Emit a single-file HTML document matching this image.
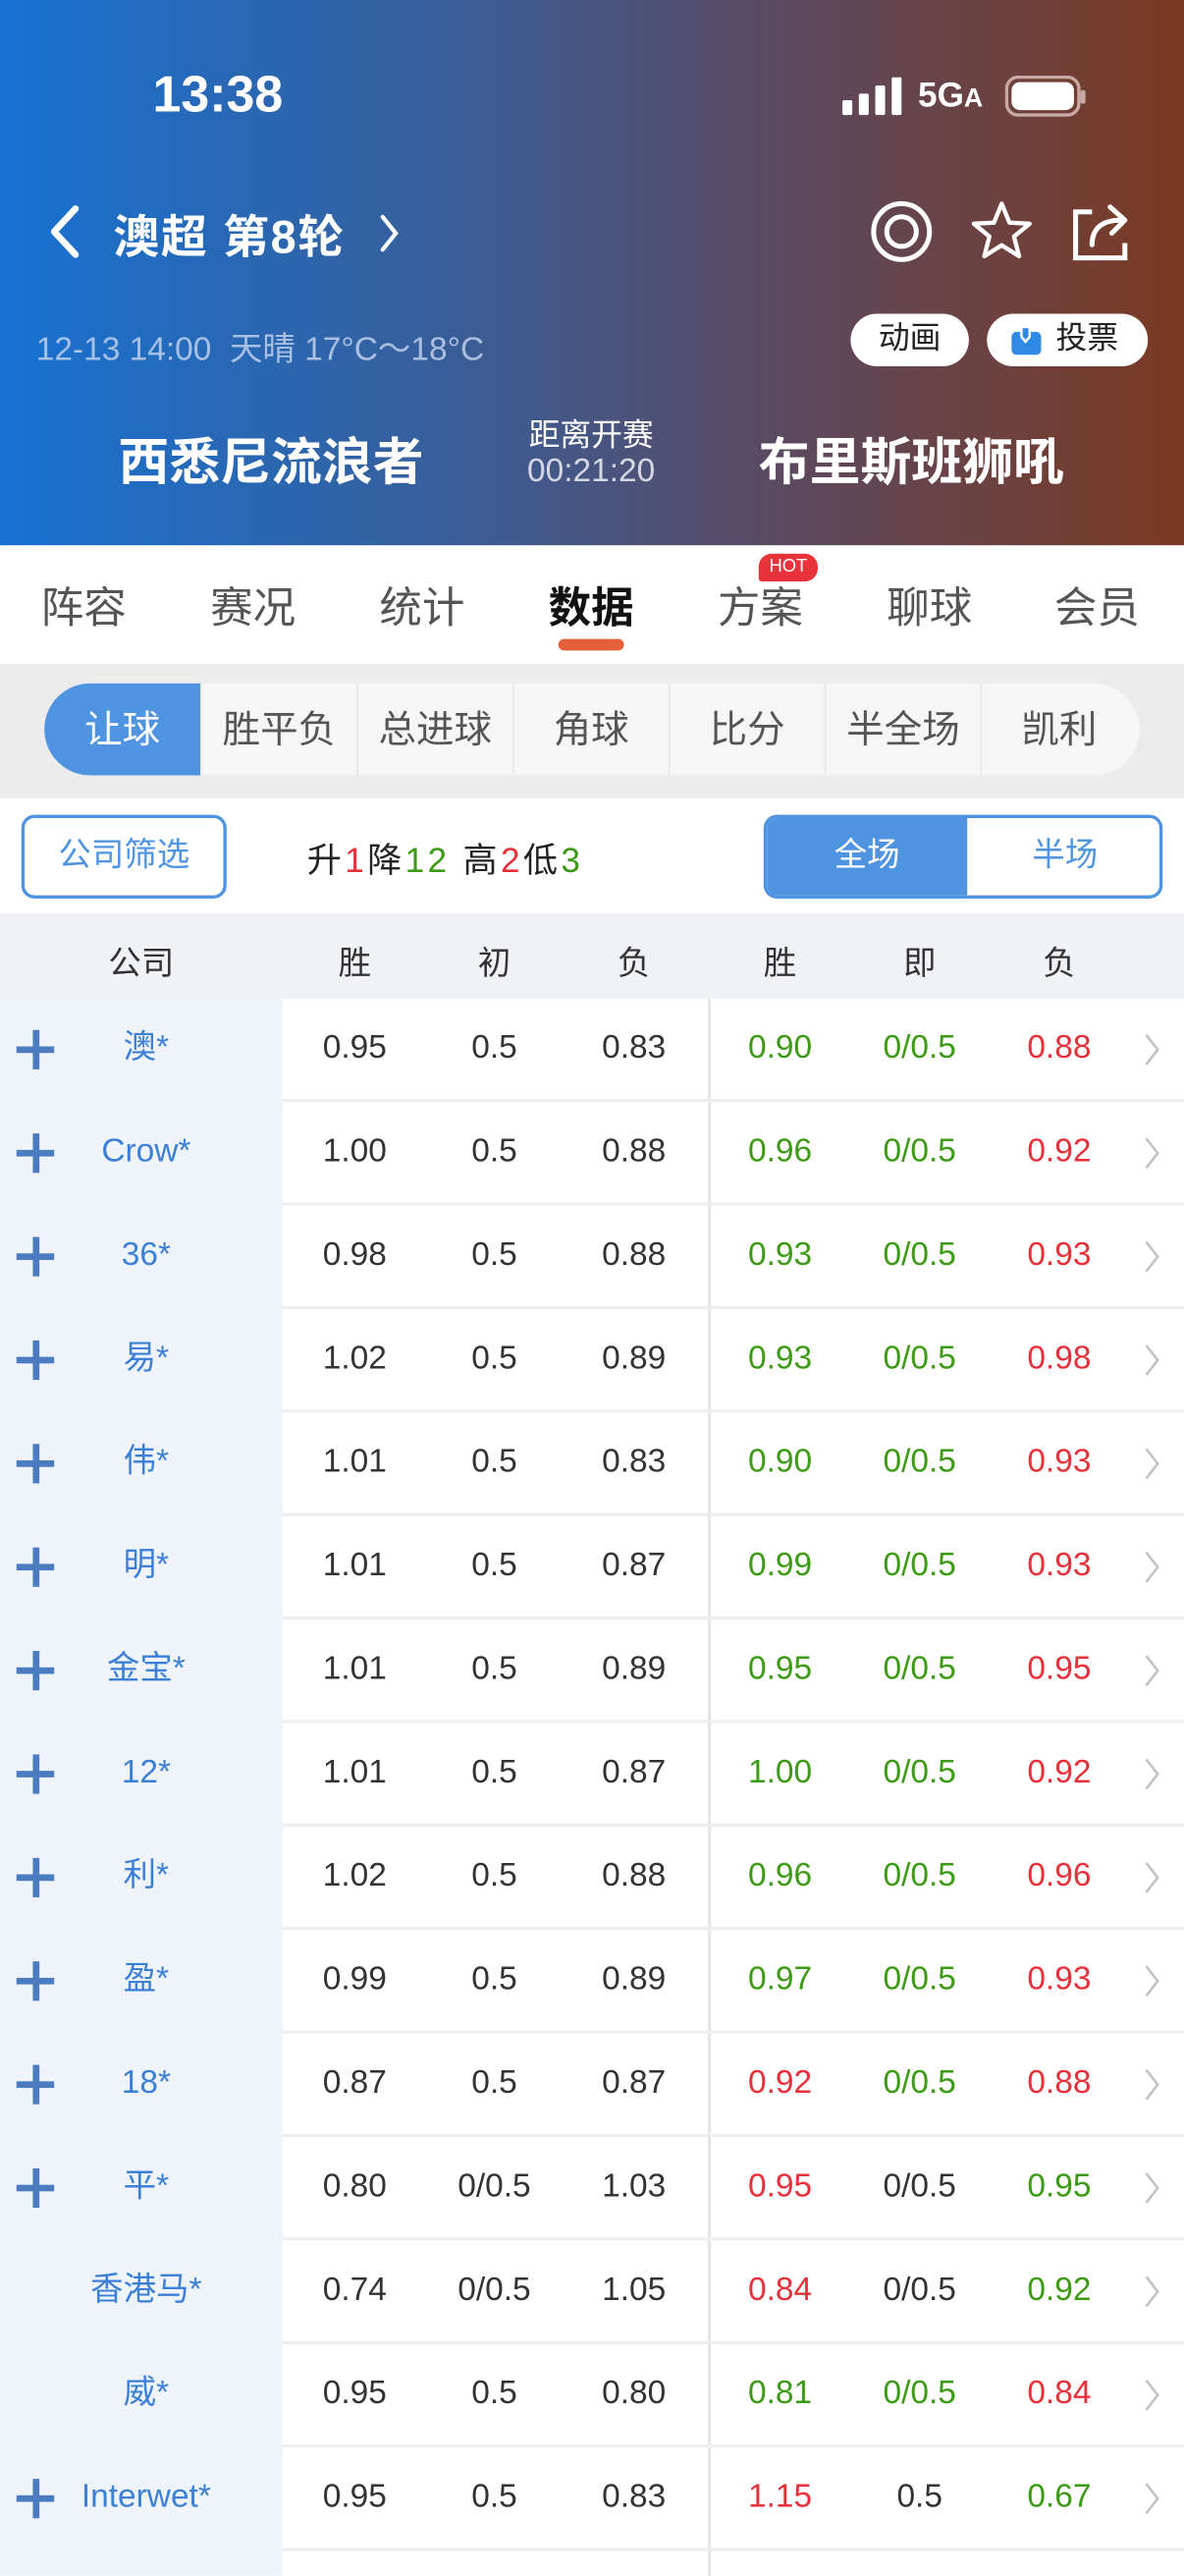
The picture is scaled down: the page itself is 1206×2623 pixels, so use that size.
<!DOCTYPE html>
<html><head><meta charset="utf-8">
<style>
*{margin:0;padding:0;box-sizing:border-box}
html,body{width:1206px;height:2622px;overflow:hidden;background:#fff}
#w{position:absolute;left:0;top:0;width:721px;height:1568px;transform:scale(1.67268);transform-origin:0 0;font-family:"Liberation Sans","Noto Sans CJK SC",sans-serif;overflow:hidden}
.a{position:absolute;white-space:nowrap}
.c{position:absolute;width:100px;text-align:center;white-space:nowrap}
#hd{position:absolute;left:0;top:0;width:721px;height:332px;background:linear-gradient(90deg,#1872d2 0%,#35609e 35%,#5a4a62 65%,#7b3a22 100%)}
.tab{position:absolute;top:350px;width:80px;text-align:center;font-size:26px;color:#555}
.seg{position:absolute;top:416px;height:56px;width:95px;text-align:center;line-height:56px;font-size:23px;color:#555;background:#f6f6f6;border-left:1px solid #e8e8e8}
.row{position:absolute;left:0;width:721px;height:63px}
.row .l{position:absolute;left:0;top:0;width:172px;height:63px;background:#eff4fa}
.row .line{position:absolute;left:172px;right:0;bottom:0;height:2px;background:#eeeeee}
.row .v{position:absolute;left:431px;top:0;width:2px;height:61px;background:#e6e6e6}
.row span{position:absolute;top:18px;height:24px;line-height:24px;width:100px;text-align:center;font-size:20px;color:#333}
.row i{position:absolute;background:#4a7cbf}
.row svg{position:absolute;left:695px;top:20px}
.row .n{left:39px;color:#3c7fd6}
.g{color:#3c9a14!important}.r{color:#e8303a!important}
</style></head><body><div id="w">
<div id="hd"></div>
<div class="a" style="left:93px;top:40px;font-size:31px;font-weight:bold;color:#fff">13:38</div>
<svg class="a" style="left:512px;top:47px" width="40" height="24"><rect x="1" y="14" width="6" height="9" rx="1" fill="#fff"/><rect x="11" y="10" width="6" height="13" rx="1" fill="#fff"/><rect x="21" y="5" width="6" height="18" rx="1" fill="#fff"/><rect x="31" y="0" width="6" height="23" rx="1" fill="#fff"/></svg>
<div class="a" style="left:559px;top:47px;font-size:21px;font-weight:bold;color:#fff">5G<span style="font-size:16px">A</span></div>
<svg class="a" style="left:612px;top:46px" width="50" height="26"><rect x="1" y="1" width="44" height="23" rx="7" fill="none" stroke="#c9a9a6" stroke-width="2"/><rect x="4" y="4" width="38" height="17" rx="5" fill="#fff"/><rect x="46" y="9" width="3" height="8" rx="1" fill="#c9a9a6"/></svg>
<svg class="a" style="left:26px;top:124px" width="26" height="34"><path d="M20 3 L7 17 L20 31" fill="none" stroke="#fff" stroke-width="4" stroke-linecap="round" stroke-linejoin="round"/></svg>
<div class="a" style="left:69px;top:123px;font-size:28px;color:#fff;font-weight:bold;letter-spacing:1px">澳超 第8轮</div>
<svg class="a" style="left:228px;top:129px" width="18" height="26"><path d="M5 3 L13 13 L5 23" fill="none" stroke="#fff" stroke-width="2.5" stroke-linecap="round"/></svg>
<svg class="a" style="left:529px;top:121px" width="40" height="40"><circle cx="20" cy="20" r="17" fill="none" stroke="#fff" stroke-width="3"/><circle cx="20" cy="20" r="9" fill="none" stroke="#fff" stroke-width="3"/></svg>
<svg class="a" style="left:590px;top:121px" width="40" height="38"><path d="M20 3 L24.7 14.5 L37 15.2 L27.5 23 L30.6 35 L20 28.3 L9.4 35 L12.5 23 L3 15.2 L15.3 14.5 Z" fill="none" stroke="#fff" stroke-width="2.6" stroke-linejoin="round"/></svg>
<svg class="a" style="left:651px;top:121px" width="40" height="40"><path d="M14 8 H4 V36 H34 V27" fill="none" stroke="#fff" stroke-width="3"/><path d="M14 28 C14 18 20 13 32 13 M25 5 L34 13 L26 21" fill="none" stroke="#fff" stroke-width="3" stroke-linecap="round" stroke-linejoin="round"/></svg>
<div class="a" style="left:22px;top:196px;font-size:20px;color:rgba(200,215,240,.8)">12-13 14:00&nbsp;&nbsp;天晴 17°C～18°C</div>
<div class="a" style="left:518px;top:191px;width:72px;height:32px;border-radius:16px;background:#fff;font-size:19px;color:#222;text-align:center;line-height:32px">动画</div>
<div class="a" style="left:601px;top:191px;width:98px;height:32px;border-radius:16px;background:#fff;font-size:19px;color:#222;line-height:32px;padding-left:42px">投票</div>
<svg class="a" style="left:615px;top:197px" width="20" height="20"><rect x="1" y="5" width="18" height="14" rx="3" fill="#2f8ae6"/><path d="M7 2 L12 2 L12 8 L9.5 11 L7 8 Z" fill="#2f8ae6" stroke="#fff" stroke-width="1.5"/></svg>
<div class="a" style="left:40px;top:256px;width:250px;text-align:center;font-size:31px;font-weight:bold;color:#fff">西悉尼流浪者</div>
<div class="a" style="left:300px;top:250px;width:120px;text-align:center;font-size:19px;color:#fff">距离开赛</div>
<div class="a" style="left:300px;top:276px;width:120px;text-align:center;font-size:20px;color:rgba(230,230,240,.9)">00:21:20</div>
<div class="a" style="left:430px;top:256px;width:250px;text-align:center;font-size:31px;font-weight:bold;color:#fff">布里斯班狮吼</div>

<div class="a" style="left:0;top:332px;width:721px;height:72px;background:#fff"></div>
<div class="tab" style="left:11px">阵容</div>
<div class="tab" style="left:114px">赛况</div>
<div class="tab" style="left:217px">统计</div>
<div class="tab" style="left:320px;color:#111;font-weight:bold">数据</div>
<div class="tab" style="left:423px">方案</div>
<div class="tab" style="left:526px">聊球</div>
<div class="tab" style="left:628px">会员</div>
<div class="a" style="left:340px;top:389px;width:40px;height:7px;border-radius:4px;background:#e2603a"></div>
<div class="a" style="left:462px;top:337px;width:36px;height:17px;border-radius:8px 8px 8px 2px;background:#e8333a;color:#fff;font-size:11px;text-align:center;line-height:17px">HOT</div>

<div class="a" style="left:0;top:404px;width:721px;height:82px;background:#ececec"></div>
<div class="a" style="left:27px;top:416px;width:667px;height:56px;border-radius:28px;background:#f6f6f6"></div>
<div class="seg" style="left:27px;background:#4f94e0;color:#fff;border:0;border-radius:28px 0 0 28px">让球</div>
<div class="seg" style="left:122px">胜平负</div>
<div class="seg" style="left:217px">总进球</div>
<div class="seg" style="left:312px">角球</div>
<div class="seg" style="left:407px">比分</div>
<div class="seg" style="left:502px">半全场</div>
<div class="seg" style="left:597px;border-radius:0 28px 28px 0">凯利</div>

<div class="a" style="left:0;top:486px;width:721px;height:70px;background:#fff"></div>
<div class="a" style="left:13px;top:496px;width:125px;height:51px;border:2px solid #4f94e0;border-radius:8px;text-align:center;line-height:47px;font-size:20px;color:#4f94e0">公司筛选</div>
<div class="a" style="left:187px;top:508px;font-size:21px;color:#222;letter-spacing:2px">升<span class="r">1</span>降<span class="g">12</span> 高<span class="r">2</span>低<span class="g">3</span></div>
<div class="a" style="left:465px;top:496px;width:243px;height:51px;border:2px solid #4f94e0;border-radius:8px;overflow:hidden;background:#fff">
<div class="a" style="left:0;top:0;width:122px;height:47px;background:#4f94e0;color:#fff;text-align:center;line-height:47px;font-size:20px">全场</div>
<div class="a" style="left:122px;top:0;width:119px;height:47px;color:#4f94e0;text-align:center;line-height:47px;font-size:20px">半场</div></div>

<div class="a" style="left:0;top:556px;width:721px;height:52px;background:#f0f2f5"></div>
<div class="c" style="left:36px;top:570px;font-size:20px;color:#333">公司</div>
<div class="c" style="left:166px;top:570px;font-size:20px;color:#333">胜</div>
<div class="c" style="left:251px;top:570px;font-size:20px;color:#333">初</div>
<div class="c" style="left:336px;top:570px;font-size:20px;color:#333">负</div>
<div class="c" style="left:425px;top:570px;font-size:20px;color:#333">胜</div>
<div class="c" style="left:510px;top:570px;font-size:20px;color:#333">即</div>
<div class="c" style="left:595px;top:570px;font-size:20px;color:#333">负</div>

<div id="rows"></div>
<script>
var d=[
[1,"澳*","0.95","0.5","0.83","g0.90","g0/0.5","r0.88"],
[1,"Crow*","1.00","0.5","0.88","g0.96","g0/0.5","r0.92"],
[1,"36*","0.98","0.5","0.88","g0.93","g0/0.5","r0.93"],
[1,"易*","1.02","0.5","0.89","g0.93","g0/0.5","r0.98"],
[1,"伟*","1.01","0.5","0.83","g0.90","g0/0.5","r0.93"],
[1,"明*","1.01","0.5","0.87","g0.99","g0/0.5","r0.93"],
[1,"金宝*","1.01","0.5","0.89","g0.95","g0/0.5","r0.95"],
[1,"12*","1.01","0.5","0.87","g1.00","g0/0.5","r0.92"],
[1,"利*","1.02","0.5","0.88","g0.96","g0/0.5","r0.96"],
[1,"盈*","0.99","0.5","0.89","g0.97","g0/0.5","r0.93"],
[1,"18*","0.87","0.5","0.87","r0.92","g0/0.5","r0.88"],
[1,"平*","0.80","0/0.5","1.03","r0.95","k0/0.5","g0.95"],
[0,"香港马*","0.74","0/0.5","1.05","r0.84","k0/0.5","g0.92"],
[0,"威*","0.95","0.5","0.80","g0.81","g0/0.5","r0.84"],
[1,"Interwet*","0.95","0.5","0.83","r1.15","k0.5","g0.67"],
[0,"","","","","","",""]];
var xs=[216,301,386,475,560,645],h="";
d.forEach(function(r,i){
 h+='<div class="row" style="top:'+(608+i*63)+'px"><div class="l"></div><div class="line"></div><div class="v"></div>';
 if(r[0])h+='<i style="left:10px;top:29px;width:23px;height:3.5px"></i><i style="left:20px;top:19px;width:3.5px;height:24px"></i>';
 h+='<span class="n">'+r[1]+'</span>';
 for(var j=0;j<6;j++){var t=r[j+2],cl="";if(j>=3&&t){cl=t[0];t=t.slice(1);}
  h+='<span class="'+(cl=="g"?"g":cl=="r"?"r":"")+'" style="left:'+(xs[j]-50)+'px">'+t+'</span>';}
 if(r[1])h+='<svg width="14" height="22"><path d="M3 2 L10 11 L3 20" fill="none" stroke="#c4c4c4" stroke-width="1.6"/></svg>';
 h+='</div>';});
document.getElementById("rows").innerHTML=h;
</script>
</div></body></html>
